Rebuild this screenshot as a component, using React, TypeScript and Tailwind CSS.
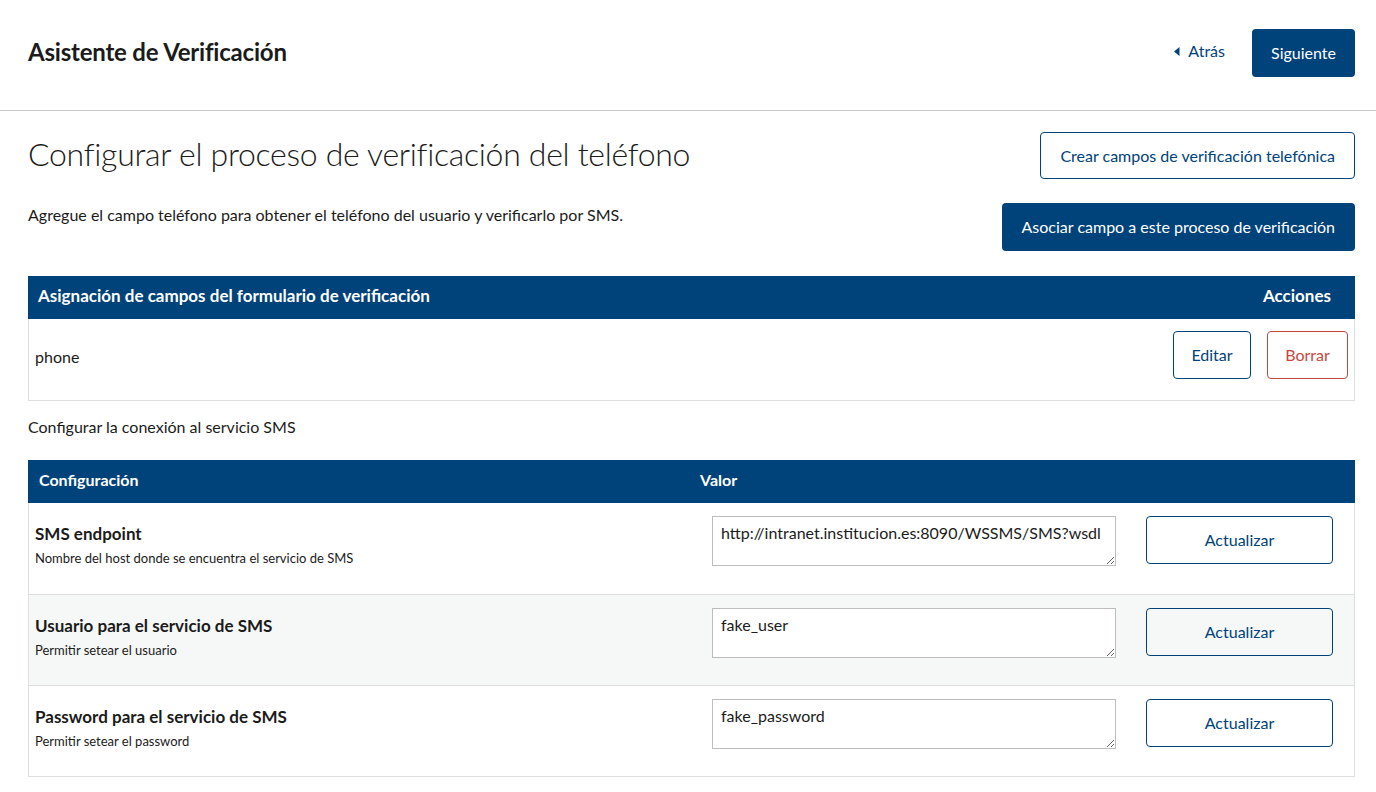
import React from "react";

const ROWS = [
  {
    label: "SMS endpoint",
    help: "Nombre del host donde se encuentra el servicio de SMS",
    value: "http://intranet.institucion.es:8090/WSSMS/SMS?wsdl",
  },
  {
    label: "Usuario para el servicio de SMS",
    help: "Permitir setear el usuario",
    value: "fake_user",
  },
  {
    label: "Password para el servicio de SMS",
    help: "Permitir setear el password",
    value: "fake_password",
  },
];

export default function App() {
  return (
    <div className="min-h-screen bg-white text-[#1b1b1b] font-['Lato',sans-serif]">
      {/* Header */}
      <header className="h-[111px] flex items-center justify-between pl-[28px] pr-[21px] border-b border-[#c8c8c8]">
        <h1 className="text-[24px] font-bold tracking-[-0.2px] -mt-[7px]">Asistente de Verificación</h1>
        <div className="flex items-center gap-[27px] -mt-[5px]">
          <a href="#" className="flex items-center gap-[8px] text-[16px] text-[#00427a] -mt-[3px]">
            <svg width="6" height="9" viewBox="0 0 6 9" aria-hidden="true">
              <path d="M5.5 0 L0 4.5 L5.5 9 Z" fill="currentColor" />
            </svg>
            Atrás
          </a>
          <button className="h-[48px] w-[103px] rounded-[4px] bg-[#00427a] text-white text-[16px]">
            Siguiente
          </button>
        </div>
      </header>

      <main className="pl-[28px] pr-[21px]">
        {/* Title row */}
        <div className="flex items-start justify-between pt-[21px]">
          <h2 className="text-[32px] font-light leading-[44px] tracking-[-0.3px]">
            Configurar el proceso de verificación del teléfono
          </h2>
          <button className="h-[47px] px-[19px] rounded-[4px] border border-[#00427a] text-[#00427a] text-[16px] bg-white">
            Crear campos de verificación telefónica
          </button>
        </div>
        <div className="flex items-start justify-between mt-[24px]">
          <p className="text-[16px]">
            Agregue el campo teléfono para obtener el teléfono del usuario y verificarlo por SMS.
          </p>
          <button className="h-[48px] px-[20px] rounded-[4px] bg-[#00427a] text-white text-[16px]">
            Asociar campo a este proceso de verificación
          </button>
        </div>

        {/* Field assignment table */}
        <div className="mt-[25px] border border-[#dedede]">
          <div className="h-[43px] bg-[#00427a] text-white font-bold text-[17px] flex items-center justify-between pl-[10px] pr-[24px] pb-[3px] -mx-px -mt-px">
            <span>Asignación de campos del formulario de verificación</span>
            <span>Acciones</span>
          </div>
          <div className="h-[81px] flex items-start justify-between pl-[6px] pr-[6px] pt-[12px]">
            <span className="text-[16px] mt-[14px]">phone</span>
            <div className="flex gap-[16px]">
              <button className="h-[48px] w-[78px] rounded-[4px] border border-[#00427a] text-[#00427a] text-[16px]">
                Editar
              </button>
              <button className="h-[48px] w-[81px] rounded-[4px] border border-[#c8473d] text-[#c8473d] text-[16px]">
                Borrar
              </button>
            </div>
          </div>
        </div>

        <p className="text-[16px] mt-[14px]">Configurar la conexión al servicio SMS</p>

        {/* SMS config table */}
        <div className="mt-[21px] border border-[#dedede]">
          <div className="h-[43px] bg-[#00427a] text-white font-bold text-[16px] flex items-center pb-[3px] -mx-px -mt-px">
            <span className="w-[661px] pl-[11px]">Configuración</span>
            <span className="pl-[11px]">Valor</span>
          </div>
          {ROWS.map((row, i) => (
            <div
              key={row.label}
              className={
                "h-[91px] flex items-start " +
                (i > 0 ? "border-t border-[#dedede] " : "") +
                (i === 1 ? "bg-[#f6f8f8]" : "bg-white")
              }
            >
              <div className="w-[660px] pl-[6px] pt-[20px]">
                <div className="text-[17px] font-bold leading-[22px]">{row.label}</div>
                <div className="text-[13px] leading-[18px] mt-[4px]">{row.help}</div>
              </div>
              <div className="flex items-start pl-[23px] pt-[13px] gap-[30px]">
                <textarea
                  defaultValue={row.value}
                  className="w-[404px] h-[50px] border border-[#bdbdbd] bg-white px-[8px] pt-[6px] text-[16px] leading-[20px] text-[#1b1b1b] font-['Lato',sans-serif] outline-none"
                />
                <button className="h-[48px] w-[187px] rounded-[4px] border border-[#00427a] text-[#00427a] text-[16px] bg-transparent">
                  Actualizar
                </button>
              </div>
            </div>
          ))}
        </div>
      </main>
    </div>
  );
}
